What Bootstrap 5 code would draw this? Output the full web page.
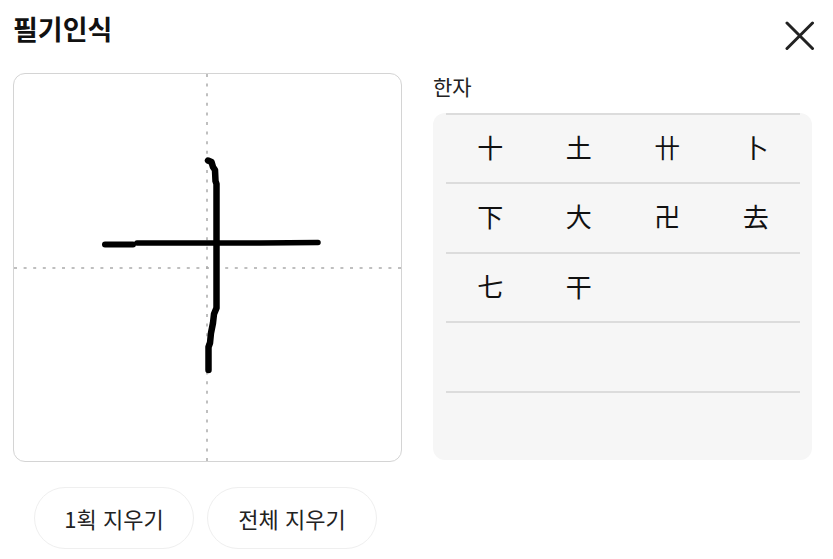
<!DOCTYPE html>
<html lang="ko">
<head>
<meta charset="utf-8">
<title>필기인식</title>
<link href="https://cdn.jsdelivr.net/npm/bootstrap@5.3.0/dist/css/bootstrap.min.css" rel="stylesheet">
<style>
html, body { height: 100%; overflow: hidden; }
body { background: #fff; color: #111; font-family: "Noto Sans CJK KR", "Liberation Sans", sans-serif; }
.hw-page { padding: 0 18px 0 13px; }
.hw-head { height: 73px; }
.hw-title { font-size: 27px; font-weight: 700; line-height: 36px; margin: 11px 0 0 0; color: #111; }
.hw-close { background: none; border: 0; padding: 0; width: 30px; height: 30px; margin-top: 21px; margin-right: 0; line-height: 0; }
.hw-left { width: 389px; }
.hw-right { width: 379px; margin-left: 31px; }
.hw-canvas { width: 389px; height: 389px; border: 1px solid #d4d4d4; border-radius: 12px; overflow: hidden; background: #fff; }
.hw-canvas svg { display: block; }
.hw-label { font-size: 21px; line-height: 27px; height: 40px; color: #222; }
.hw-panel { height: 347px; background: #f6f6f6; border-radius: 12px; padding: 0 12px 0 13px; }
.hw-row { height: 69px; border-top: 2px solid #dcdcdc; margin: 0; }
.hw-row:nth-child(even) { height: 70px; }
.hw-cell { width: 25%; font-size: 26px; line-height: 63px; text-align: center; color: #111; font-family: "Noto Sans CJK KR", sans-serif; }
.hw-btns { margin-top: 25px; padding-left: 21px; gap: 13px; }
.hw-btn { height: 62px; font-size: 22px; color: #222; background: #fff; border: 1px solid #efefef; padding: 0; line-height: 57px; }
.hw-btn-a { width: 160px; }
.hw-btn-b { width: 170px; }
</style>
</head>
<body>
<div class="hw-page">
  <div class="hw-head d-flex justify-content-between align-items-start">
    <h1 class="hw-title">필기인식</h1>
    <button type="button" class="hw-close" aria-label="닫기">
      <svg width="30" height="30" viewBox="0 0 30 30" fill="none" stroke="#222" stroke-width="3" stroke-linecap="round"><path d="M2 2 L27.500 27.500 M27.500 2 L2 27.500"/></svg>
    </button>
  </div>
  <div class="d-flex">
    <div class="hw-left">
      <div class="hw-canvas">
        <svg width="387" height="387" viewBox="14 74 387 387" fill="none">
          <path d="M207 74V461M14 268H401" stroke="#aaa" stroke-width="1.5" stroke-dasharray="3 6.6"/>
          <g stroke="#000" stroke-linejoin="round" stroke-linecap="round">
            <path d="M105 244.500H133" stroke-width="6"/>
            <path d="M137 243H260L318 242.500" stroke-width="5.500"/>
            <path d="M208 160.500L211.500 162L213 167L215 170L215.500 181L216.500 184V308L214 314L213 323L211 333L210 343L208.500 347V370" stroke-width="6.500"/>
          </g>
        </svg>
      </div>
      <div class="hw-btns d-flex">
        <button type="button" class="btn rounded-pill hw-btn hw-btn-a">1획 지우기</button>
        <button type="button" class="btn rounded-pill hw-btn hw-btn-b">전체 지우기</button>
      </div>
    </div>
    <div class="hw-right">
      <div class="hw-label">한자</div>
      <div class="hw-panel">
        <div class="hw-row d-flex"><div class="hw-cell">十</div><div class="hw-cell">土</div><div class="hw-cell">卄</div><div class="hw-cell">卜</div></div>
        <div class="hw-row d-flex"><div class="hw-cell">下</div><div class="hw-cell">大</div><div class="hw-cell">卍</div><div class="hw-cell">去</div></div>
        <div class="hw-row d-flex"><div class="hw-cell">七</div><div class="hw-cell">干</div></div>
        <div class="hw-row d-flex"></div>
        <div class="hw-row d-flex"></div>
      </div>
    </div>
  </div>
</div>
<script src="https://cdn.jsdelivr.net/npm/bootstrap@5.3.0/dist/js/bootstrap.bundle.min.js"></script>
</body>
</html>
